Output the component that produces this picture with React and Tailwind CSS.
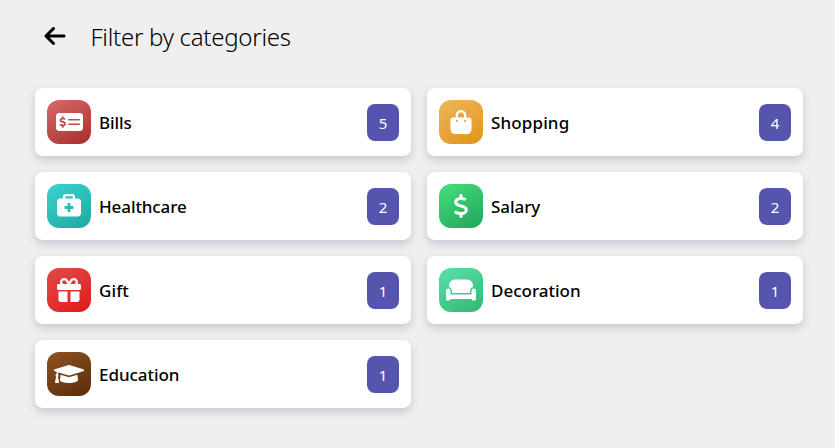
import {
  FaArrowLeft,
  FaMoneyCheckDollar,
  FaBagShopping,
  FaBriefcaseMedical,
  FaDollarSign,
  FaGift,
  FaCouch,
} from 'react-icons/fa6';
import { FaGraduationCap } from 'react-icons/fa';

const categories = [
  { name: 'Bills', count: 5, Icon: FaMoneyCheckDollar, size: 'h-6 w-[27px]', tile: 'from-[#d66a6a] to-[#a82c2c]', track: 'tracking-[-0.1px]' },
  { name: 'Shopping', count: 4, Icon: FaBagShopping, size: 'size-6', tile: 'from-[#ecb75a] to-[#e29307]', track: 'tracking-[0.13px]' },
  { name: 'Healthcare', count: 2, Icon: FaBriefcaseMedical, size: 'size-6', tile: 'from-[#3bd3cf] to-[#1fa8a0]', track: 'tracking-[-0.1px]' },
  { name: 'Salary', count: 2, Icon: FaDollarSign, size: 'size-6', tile: 'from-[#45e07c] to-[#22a45c]', track: 'tracking-[-0.05px]' },
  { name: 'Gift', count: 1, Icon: FaGift, size: 'size-6', tile: 'from-[#e04848] to-[#e01414]', track: 'tracking-[0.1px]' },
  { name: 'Decoration', count: 1, Icon: FaCouch, size: 'h-6 w-[30px]', tile: 'from-[#5ce0ac] to-[#2fb873]', track: 'tracking-[0px]' },
  { name: 'Education', count: 1, Icon: FaGraduationCap, size: 'h-6 w-[30px]', tile: 'from-[#8f5322] to-[#5c2c08]', track: 'tracking-[-0.05px]' },
];

function CategoryCard({ name, count, Icon, size, tile, track }) {
  return (
    <button className="flex h-[68px] items-center rounded-lg bg-white px-3 text-left shadow-[0_4px_9px_rgba(50,50,93,0.2)]">
      <span className={`flex size-11 items-center justify-center rounded-xl bg-linear-150 text-white ${tile}`}>
        <Icon className={`shrink-0 ${size}`} />
      </span>
      <span className={`ml-2 flex-1 pt-0.5 text-[17px] leading-6 font-medium text-black ${track}`}>{name}</span>
      <span className="mt-px flex h-[37px] w-8 items-center justify-center rounded-lg bg-[#5555ad] pt-px text-[15px] text-white">
        {count}
      </span>
    </button>
  );
}

export default function App() {
  return (
    <main className="h-[448px] bg-[#efefef] pr-8 pl-[35px] font-['Noto_Sans',sans-serif]">
      <header className="flex h-[88px] items-center gap-6 pb-3 pl-[7.5px]">
        <button aria-label="Back" className="pb-1">
          <FaArrowLeft className="size-6" />
        </button>
        <h1 className="pb-[3px] text-2xl font-light tracking-[-0.27px] text-black">Filter by categories</h1>
      </header>
      <section className="grid grid-cols-2 gap-4">
        {categories.map((category) => (
          <CategoryCard key={category.name} {...category} />
        ))}
      </section>
    </main>
  );
}
